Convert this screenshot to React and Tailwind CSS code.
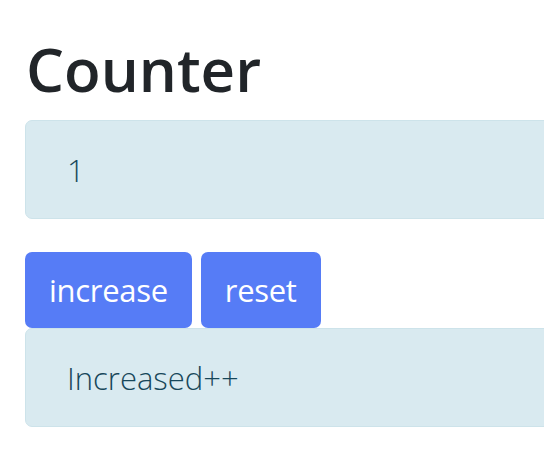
import React, { useState } from 'react';

const Counter = () => {
  const [count, setCount] = useState(1);
  const [message, setMessage] = useState('Increased++');

  const increase = () => {
    setCount(count + 1);
    setMessage('Increased++');
  };

  const reset = () => {
    setCount(0);
    setMessage('Reset');
  };

  return (
    <div className="w-full overflow-hidden bg-white font-['Open_Sans',sans-serif] min-h-[458px]">
      <div className="w-[700px] pl-[25px] pt-[33px]">
        <h1 className="text-[60px] leading-[72px] font-semibold text-[#212529] mb-[15px] pl-[1px]">Counter</h1>

        {/* count */}
        <div className="rounded-[7px] border border-[#cde3ea] bg-[#d9eaf0] pl-[41px] pt-[25px] pb-[24px] text-[31px] leading-[48px] font-light text-[#17475a] mb-[33px]">
          {count}
        </div>

        {/* actions */}
        <div className="flex gap-[9px]">
          <button
            onClick={increase}
            className="rounded-[7px] bg-[#567cf6] px-[24px] py-[14px] text-[31px] leading-[48px] tracking-[-0.3px] text-white"
          >
            increase
          </button>
          <button
            onClick={reset}
            className="rounded-[7px] bg-[#567cf6] px-[24px] py-[14px] text-[31px] leading-[48px] tracking-[-0.3px] text-white"
          >
            reset
          </button>
        </div>

        {/* last action */}
        <div className="rounded-[7px] border border-[#cde3ea] bg-[#d9eaf0] pl-[41px] pt-[25px] pb-[24px] text-[31px] leading-[48px] font-light text-[#17475a]">
          {message}
        </div>
      </div>
    </div>
  );
};

export default function App() {
  return <Counter />;
}
